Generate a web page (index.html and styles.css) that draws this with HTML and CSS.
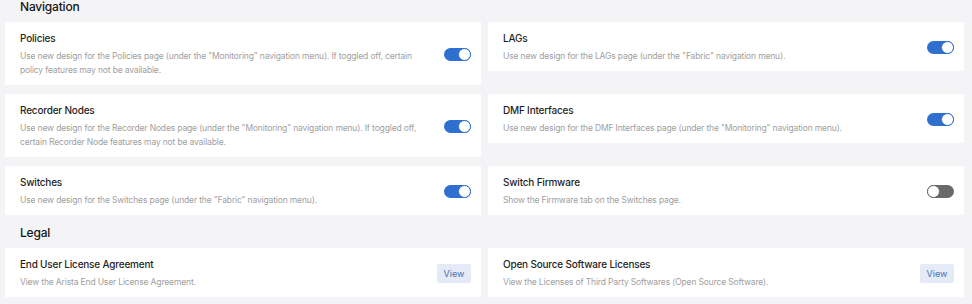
FILE: index.html
```html
<!DOCTYPE html>
<html lang="en">

<head>
    <meta charset="UTF-8">
    <meta name="viewport" content="width=device-width, initial-scale=1.0">
    <title>Settings</title>
    <link rel="stylesheet" href="styles.css">
</head>

<body>
    <div class="page">
        <h2 class="section-title first">Navigation</h2>
        <div class="grid">
            <div class="card">
                <div class="text">
                    <div class="title">Policies</div>
                    <div class="desc">Use new design for the Policies page (under the "Monitoring" navigation menu). If toggled off, certain policy features may not be available.</div>
                </div>
                <span class="toggle on"></span>
            </div>
            <div class="card">
                <div class="text">
                    <div class="title">LAGs</div>
                    <div class="desc">Use new design for the LAGs page (under the "Fabric" navigation menu).</div>
                </div>
                <span class="toggle on"></span>
            </div>
            <div class="card">
                <div class="text">
                    <div class="title">Recorder Nodes</div>
                    <div class="desc">Use new design for the Recorder Nodes page (under the "Monitoring" navigation menu). If toggled off, certain Recorder Node features may not be available.</div>
                </div>
                <span class="toggle on"></span>
            </div>
            <div class="card">
                <div class="text">
                    <div class="title">DMF Interfaces</div>
                    <div class="desc">Use new design for the DMF Interfaces page (under the "Monitoring" navigation menu).</div>
                </div>
                <span class="toggle on"></span>
            </div>
            <div class="card">
                <div class="text">
                    <div class="title">Switches</div>
                    <div class="desc">Use new design for the Switches page (under the "Fabric" navigation menu).</div>
                </div>
                <span class="toggle on"></span>
            </div>
            <div class="card">
                <div class="text">
                    <div class="title">Switch Firmware</div>
                    <div class="desc">Show the Firmware tab on the Switches page.</div>
                </div>
                <span class="toggle"></span>
            </div>
        </div>

        <h2 class="section-title">Legal</h2>
        <div class="grid">
            <div class="card">
                <div class="text">
                    <div class="title">End User License Agreement</div>
                    <div class="desc">View the Arista End User License Agreement.</div>
                </div>
                <button class="view-btn">View</button>
            </div>
            <div class="card">
                <div class="text">
                    <div class="title">Open Source Software Licenses</div>
                    <div class="desc">View the Licenses of Third Party Softwares (Open Source Software).</div>
                </div>
                <button class="view-btn">View</button>
            </div>
        </div>
    </div>
</body>

</html>
```

FILE: styles.css
```css
/* base */
body {
    margin: 0;
    background-color: #f4f4f6;
    font-family: Inter, "Noto Sans", sans-serif;
    color: #1f1f1f;
}

.page {
    padding: 0 8px 0 5px;
}

.section-title {
    margin: 0;
    padding: 11px 15px 8px;
    font-size: 12px;
    line-height: 14px;
    font-weight: 500;
    letter-spacing: -0.2px;
    color: #151515;
}

.section-title.first {
    padding-top: 0;
}

.grid {
    display: grid;
    grid-template-columns: 1fr 1fr;
    column-gap: 7px;
    row-gap: 9px;
    align-items: start;
}

/* cards */
.card {
    background-color: #fff;
    display: flex;
    align-items: center;
    justify-content: space-between;
    padding: 10px 10px 8px 15px;
}

.text {
    flex: 1;
    padding-right: 24px;
}

.title {
    font-size: 10px;
    line-height: 13px;
    font-weight: 500;
    letter-spacing: -0.2px;
    color: #1f1f1f;
}

.desc {
    margin-top: 4px;
    font-size: 8.5px;
    line-height: 14px;
    letter-spacing: -0.15px;
    color: #a0a0a0;
}

/* toggle switch */
.toggle {
    flex: none;
    position: relative;
    width: 27px;
    height: 13px;
    border-radius: 7px;
    background-color: #6a6a6c;
}

.toggle::after {
    content: "";
    position: absolute;
    top: 0;
    left: 0;
    width: 11px;
    height: 11px;
    border-radius: 50%;
    background-color: #fff;
    border: 1px solid #6a6a6c;
}

.toggle.on {
    background-color: #2f6fd0;
}

.toggle.on::after {
    left: auto;
    right: 0;
    border-color: #2f6fd0;
}

.view-btn {
    flex: none;
    width: 34px;
    height: 19px;
    padding: 0;
    border: none;
    border-radius: 2px;
    background-color: #e5ebf6;
    color: #4a6fb3;
    font-family: Inter, "Noto Sans", sans-serif;
    font-size: 9px;
}
```
